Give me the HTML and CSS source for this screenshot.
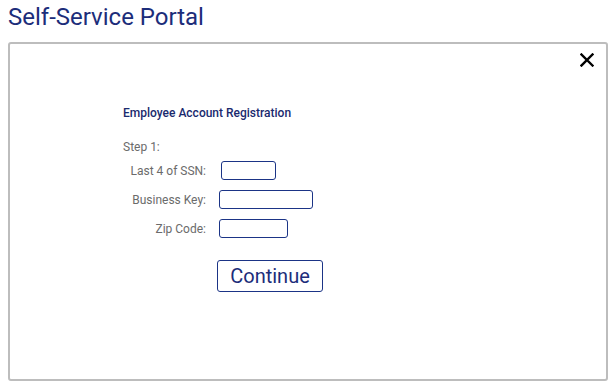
FILE: index.html
```html
<!DOCTYPE html>
<html>
<head>
<meta charset="utf-8">
<link rel="stylesheet" href="styles.css">
</head>
<body>
<h1 class="title">Self-Service Portal</h1>
<div class="panel">
  <button class="close" aria-label="Close">
    <svg width="14" height="14" viewBox="0 0 14 14"><path d="M1.5 1.5 L12.5 12.5 M12.5 1.5 L1.5 12.5" stroke="#000" stroke-width="2.4" stroke-linecap="square"/></svg>
  </button>
  <div class="content">
    <h2 class="heading">Employee Account Registration</h2>
    <div class="step">Step 1:</div>
    <div class="form">
      <label class="label">Last 4 of SSN:</label>
      <div class="field"><span class="input ssn"></span></div>
      <label class="label">Business Key:</label>
      <div class="field"><span class="input key"></span></div>
      <label class="label">Zip Code:</label>
      <div class="field"><span class="input zip"></span></div>
    </div>
    <div class="actions"><button class="continue">Continue</button></div>
  </div>
</div>
</body>
</html>
```
FILE: styles.css
```css
html, body { margin: 0; padding: 0; background: #fff; }
body { padding: 0 8px; font-family: Roboto, "Liberation Sans", sans-serif; }
.title {
  margin: 0;
  padding-top: 3px;
  font-size: 24px;
  line-height: 28px;
  font-weight: 400;
  color: #1c2d7a;
  height: 38px;
  box-sizing: border-box;
}
.panel {
  position: relative;
  box-sizing: border-box;
  width: 600px;
  height: 339px;
  margin-top: 4px;
  border: 2px solid #bdbdbd;
  border-radius: 3px;
}
.close {
  position: absolute;
  top: 9px;
  right: 12px;
  background: none;
  border: 0;
  padding: 0;
  width: 14px;
  height: 14px;
  display: flex;
}
.content { padding: 61px 0 0 113px; }
.heading {
  margin: 0;
  font-size: 12px;
  line-height: 16px;
  font-weight: 500;
  color: #1a2a6e;
}
.step {
  margin-top: 18px;
  font-size: 12px;
  line-height: 16px;
  color: #6b6b6b;
}
.form {
  margin-top: 6px;
  display: grid;
  grid-template-columns: 83px auto;
  column-gap: 13px;
  row-gap: 10px;
  align-items: center;
  justify-items: start;
}
.label {
  justify-self: end;
  font-size: 12px;
  line-height: 16px;
  color: #6b6b6b;
}
.field { display: flex; }
.input {
  display: block;
  box-sizing: border-box;
  height: 19px;
  border: 1.5px solid #1b3486;
  border-radius: 3px;
}
.ssn { width: 55px; margin-left: 2px; }
.key { width: 94px; }
.zip { width: 69px; }
.actions { margin-top: 22px; padding-left: 94px; }
.continue {
  box-sizing: border-box;
  width: 106px;
  height: 32px;
  background: #fff;
  border: 1px solid #1b3486;
  border-radius: 3px;
  font-family: Roboto, "Liberation Sans", sans-serif;
  font-size: 20px;
  color: #1c2d7a;
  padding: 0;
}
```
